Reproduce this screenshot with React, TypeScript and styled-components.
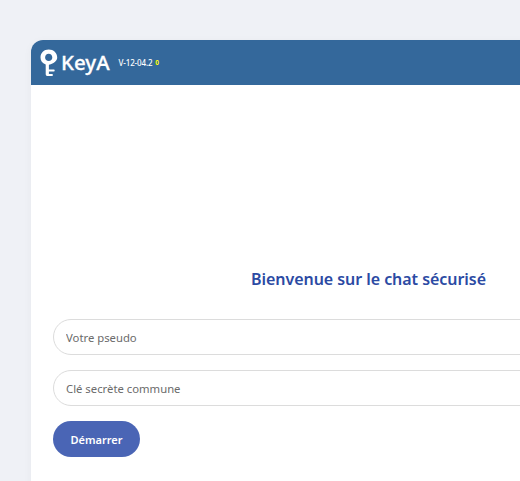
import React from "react";
import styled, { createGlobalStyle } from "styled-components";

const Global = createGlobalStyle`
  html, body {
    margin: 0;
    height: 100%;
    overflow: hidden;
    background: #eff1f6;
  }
  #root { height: 100%; }
`;

const Page = styled.div`
  box-sizing: border-box;
  width: 520px;
  height: 481px;
  padding: 40px 0 0 31px;
  overflow: hidden;
  font-family: "Noto Sans", sans-serif;
`;

const Card = styled.div`
  width: 700px;
  height: 600px;
  background: #fff;
  border-radius: 12px 0 0 0;
  box-shadow: 0 2px 10px rgb(0 0 0 / 0.04);
  overflow: hidden;
`;

const Header = styled.header`
  display: flex;
  align-items: center;
  height: 45px;
  padding-left: 9px;
  background: #34689b;
  color: #fff;
`;

const Brand = styled.span`
  font-family: "Noto Sans", sans-serif;
  font-size: 20.5px;
  font-weight: 500;
  -webkit-text-stroke: 0.3px #fff;
  margin-left: 3px;
  line-height: 1;
`;

const Version = styled.span`
  font-family: "Noto Sans", sans-serif;
  font-size: 8px;
  font-weight: 500;
  margin-left: 9px;
  letter-spacing: -0.15px;
`;

const Counter = styled.span`
  font-family: "Noto Sans", sans-serif;
  font-size: 6.5px;
  font-weight: 700;
  color: #ffff00;
  margin-left: 3px;
`;

const Body = styled.main`
  display: flex;
  flex-direction: column;
  padding: 0 22px;
`;

const Title = styled.h2`
  margin: 183px 0 0;
  width: 631px;
  text-align: center;
  font-family: "Noto Sans", sans-serif;
  font-size: 16px;
  line-height: 22px;
  font-weight: 600;
  letter-spacing: -0.05px;
  color: #2b4aa3;
`;

const Field = styled.input`
  box-sizing: border-box;
  display: block;
  width: 640px;
  height: 36px;
  margin-top: 15px;
  padding: 0 12px;
  border: 1px solid #dcdcdc;
  border-radius: 18px;
  background: #fff;
  outline: none;
  font-family: "Noto Sans", sans-serif;
  font-size: 11.3px;
  color: #555;

  &::placeholder {
    color: #6b6b6b;
    opacity: 1;
  }

  &:first-of-type {
    margin-top: 29px;
  }
`;

const StartButton = styled.button`
  width: 87px;
  height: 36px;
  margin-top: 15px;
  padding: 0;
  border: none;
  border-radius: 18px;
  background: #4a65b5;
  color: #fff;
  font-family: "Noto Sans", sans-serif;
  font-size: 11px;
  font-weight: 600;
`;

const KeyLogo = () => (
  <svg width="18" height="28" viewBox="0 0 18 28">
    <path
      fillRule="evenodd"
      fill="#fff"
      d="M8.700 0.500C3.900 0.500 0.500 4 0.500 8.400c0 3.200 1.700 5.500 5.200 7.100V25c0 1.400.8 2 2 2h4c.8 0 1.200-.5 1.200-1.100s-.4-1-1.200-1H8.900V22.400h4.700c.8 0 1.100-.5 1.100-1s-.3-1-1.100-1H8.900v-4.700C14.300 14.200 17.200 11.600 17.200 8.400 17.200 4 13.600.5 8.700.5zM8.700 4.800c2.100 0 3.600 1.600 3.600 3.600S10.800 12 8.700 12 5.100 10.400 5.100 8.400 6.600 4.800 8.700 4.800z"
    />
  </svg>
);

export default function App() {
  return (
    <>
      <Global />
      <Page>
        <Card>
          <Header>
            <KeyLogo />
            <Brand>KeyA</Brand>
            <Version>V-12-04.2</Version>
            <Counter>0</Counter>
          </Header>
          <Body>
            <Title>Bienvenue sur le chat sécurisé</Title>
            <Field placeholder="Votre pseudo" />
            <Field placeholder="Clé secrète commune" />
            <div>
              <StartButton>Démarrer</StartButton>
            </div>
          </Body>
        </Card>
      </Page>
    </>
  );
}
